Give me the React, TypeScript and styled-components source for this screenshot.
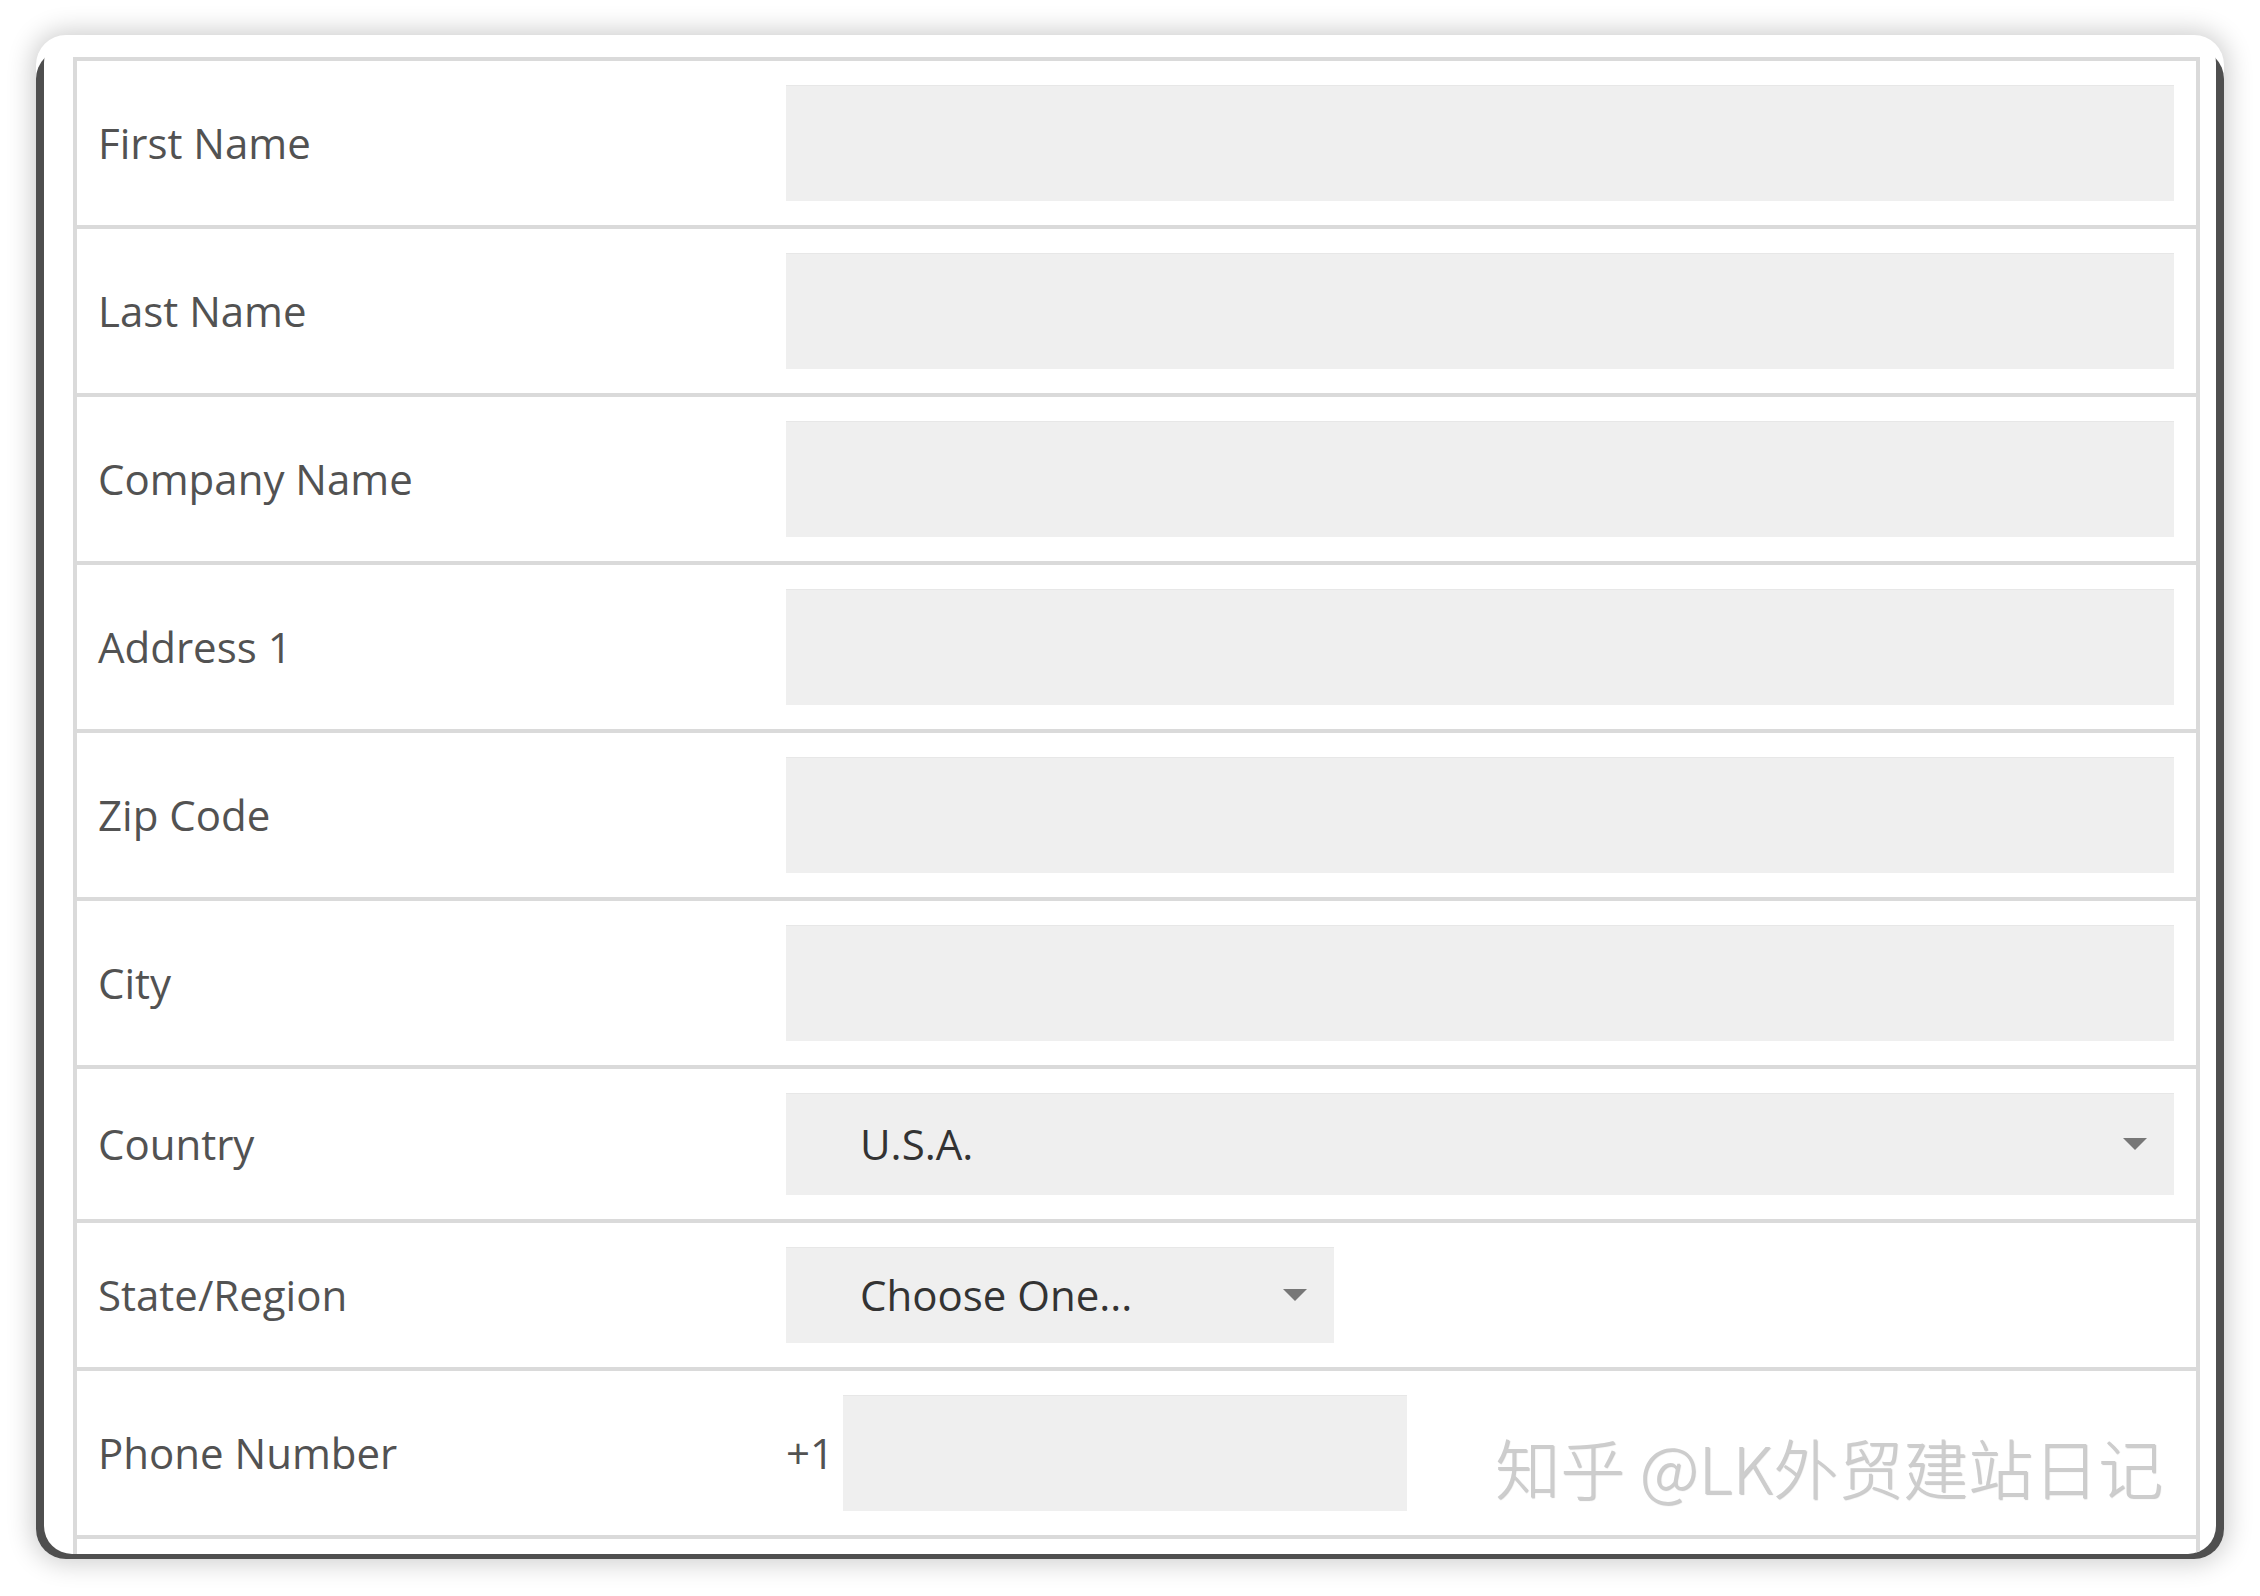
import React from "react";
import styled, { createGlobalStyle } from "styled-components";

const GlobalStyle = createGlobalStyle`
  html, body {
    margin: 0;
    padding: 0;
    background: #ffffff;
  }
  body {
    font-family: "Open Sans", "Liberation Sans", sans-serif;
  }
  *, *::before, *::after {
    box-sizing: border-box;
  }
`;

const Page = styled.div`
  width: 2260px;
  height: 1596px;
  padding: 35px 36px 37px;
  background: #ffffff;
  overflow: hidden;
`;

/* Dark frame sitting behind the white sheet, showing on left, right and bottom */
const Frame = styled.div`
  position: relative;
  height: 1524px;
  border-radius: 30px;
  box-shadow: 0 0 26px 4px rgba(0, 0, 0, 0.2);

  &::before {
    content: "";
    position: absolute;
    top: 14px;
    left: 0;
    right: 0;
    bottom: 0;
    background: #4f4f4f;
    border-radius: 30px;
  }
`;

const Card = styled.div`
  position: relative;
  height: 1519px;
  margin: 0 8px;
  background: #ffffff;
  border-radius: 28px;
  padding: 22px 16px 0 29px;
  overflow: hidden;
`;

const Table = styled.div`
  border: 4px solid #dadada;
  border-bottom: none;
  padding-bottom: 80px;
`;

const Row = styled.div`
  display: grid;
  grid-template-columns: 688px 1fr;
  align-items: center;
  padding: 24px 22px 24px 21px;
  border-bottom: 4px solid #dadada;
`;

const Label = styled.label`
  font-size: 42px;
  line-height: 1.2;
  color: #525252;
`;

const TextInput = styled.input<{ $width?: number }>`
  display: block;
  width: ${(p) => (p.$width ? `${p.$width}px` : "100%")};
  height: 116px;
  margin: 0;
  padding: 0 24px;
  border: none;
  outline: none;
  background: #efefef;
  box-shadow: inset 0 1px 0 #e7e7e7;
  font: inherit;
  font-size: 42px;
  color: #333333;
`;

const SelectBox = styled.div<{ $width?: number; $height: number }>`
  display: flex;
  align-items: center;
  justify-content: space-between;
  width: ${(p) => (p.$width ? `${p.$width}px` : "100%")};
  height: ${(p) => p.$height}px;
  padding: 0 27px 0 74px;
  background: #efefef;
  box-shadow: inset 0 1px 0 #e7e7e7;
  font-size: 42px;
  line-height: 1.2;
  color: #333333;
  cursor: pointer;
`;

const Arrow = styled.svg`
  display: block;
  flex: none;
`;

const PhoneField = styled.div`
  display: flex;
  align-items: center;
  gap: 9px;
`;

const Prefix = styled.span`
  font-size: 42px;
  line-height: 1.2;
  color: #525252;
`;

const Watermark = styled.div`
  position: absolute;
  top: 1399px;
  right: 53px;
  font-family: "Noto Sans CJK SC", "Noto Sans", sans-serif;
  font-size: 65px;
  font-weight: 300;
  line-height: 1;
  color: #cdcdcd;
  text-shadow: 1px 1px 1px rgba(0, 0, 0, 0.22), -1px -1px 0 rgba(255, 255, 255, 0.9);
  white-space: nowrap;
  pointer-events: none;
`;

const DownArrow = () => (
  <Arrow width="24" height="12" viewBox="0 0 24 12" aria-hidden="true">
    <polygon points="0,0 24,0 12,12" fill="#777777" />
  </Arrow>
);

const textFields = ["First Name", "Last Name", "Company Name", "Address 1", "Zip Code", "City"];

export default function App() {
  return (
    <>
      <GlobalStyle />
      <Page>
        <Frame>
          <Card>
            <Table>
              {textFields.map((name) => (
                <Row key={name}>
                  <Label>{name}</Label>
                  <TextInput type="text" aria-label={name} />
                </Row>
              ))}
              <Row>
                <Label>Country</Label>
                <SelectBox $height={102} role="combobox" aria-label="Country">
                  <span>U.S.A.</span>
                  <DownArrow />
                </SelectBox>
              </Row>
              <Row>
                <Label>State/Region</Label>
                <SelectBox $width={548} $height={96} role="combobox" aria-label="State/Region">
                  <span>Choose One...</span>
                  <DownArrow />
                </SelectBox>
              </Row>
              <Row>
                <Label>Phone Number</Label>
                <PhoneField>
                  <Prefix>+1</Prefix>
                  <TextInput type="tel" $width={564} aria-label="Phone Number" />
                </PhoneField>
              </Row>
            </Table>
            <Watermark>知乎 @LK外贸建站日记</Watermark>
          </Card>
        </Frame>
      </Page>
    </>
  );
}
